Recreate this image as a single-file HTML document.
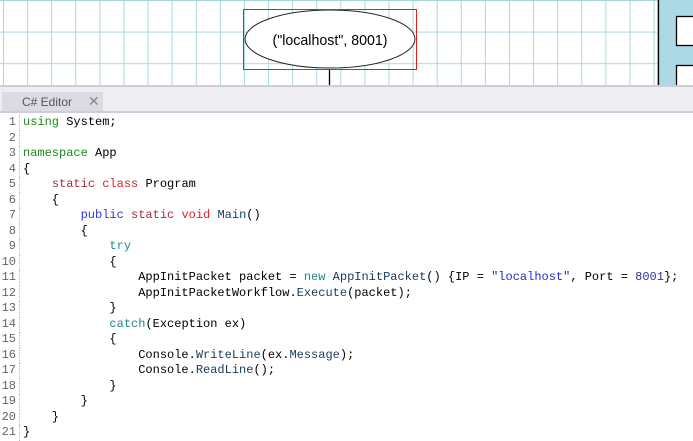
<!DOCTYPE html>
<html><head><style>
body{margin:0;width:693px;height:441px;overflow:hidden;background:#fff;position:relative;font-family:"Liberation Sans",sans-serif}
#canvas{position:absolute;left:0;top:0;width:693px;height:85px;background-color:#fff;
background-image:linear-gradient(to right,#a8d8e0 1px,transparent 1px),linear-gradient(to bottom,#a8d8e0 1px,transparent 1px);
background-size:24.1px 31.6px;background-position:3px 0px;}
#sep{position:absolute;left:0;top:85px;width:693px;height:2px;background:#d0ccd8}
#bar{position:absolute;left:0;top:87px;width:693px;height:24px;background:#eeedf2;border-bottom:2px solid #cfcadc}
#tab{position:absolute;left:2px;top:92px;width:101px;height:19px;background:#dcdbe3;font-size:12px;color:#555;}
#code{position:absolute;left:0;top:115px;font-family:"Liberation Mono",monospace;font-size:12px;line-height:15.5px;white-space:pre;color:#000}
.n{display:inline-block;width:16px;text-align:right;color:#666;padding-right:3px;border-right:1px dotted #bbb;margin-right:3px}
.g{color:#1a8a1a}.r{color:#a03040}.rd{color:#e02030}.b{color:#3333dd}.t{color:#1a8a8a}.f{color:#1a3a5a}.s{color:#2a2acc}.nm{color:#333399}
</style></head><body>
<div id="canvas"></div>
<svg style="position:absolute;left:0;top:0" width="693" height="86">
<line x1="329.5" y1="69" x2="329.5" y2="86" stroke="#000" stroke-width="1.3"/>
<ellipse cx="330" cy="39" rx="85" ry="29" fill="#fff" stroke="#222" stroke-width="1"/>
<rect x="243.5" y="9.5" width="173" height="60" fill="none" stroke="#e02020" stroke-width="1"/>
<text x="330" y="45" text-anchor="middle" font-family="Liberation Sans Narrow, Liberation Sans, sans-serif" font-size="15" textLength="115" lengthAdjust="spacingAndGlyphs" fill="#000">("localhost", 8001)</text>
<rect x="657" y="0" width="40" height="86" fill="#add8e6"/>
<line x1="658.5" y1="0" x2="658.5" y2="86" stroke="#000" stroke-width="1.3"/>
<rect x="676.5" y="16.5" width="20" height="29" fill="#fff" stroke="#000" stroke-width="1.3"/>
<rect x="676.5" y="65.5" width="20" height="25" fill="#fff" stroke="#000" stroke-width="1.3"/>
</svg>
<div id="sep"></div>
<div id="bar"></div>
<div id="tab"><span style="position:absolute;left:20px;top:3px">C# Editor</span><span style="position:absolute;left:86px;top:1px;font-size:14px;color:#888">✕</span></div>
<div id="code"><span class="n">1</span><span class="g">using</span> System;
<span class="n">2</span>
<span class="n">3</span><span class="g">namespace</span> App
<span class="n">4</span>{
<span class="n">5</span>    <span class="r">static</span> <span class="rd">class</span> Program
<span class="n">6</span>    {
<span class="n">7</span>        <span class="b">public</span> <span class="r">static</span> <span class="rd">void</span> <span class="f">Main</span>()
<span class="n">8</span>        {
<span class="n">9</span>            <span class="t">try</span>
<span class="n">10</span>            {
<span class="n">11</span>                AppInitPacket packet = <span class="t">new</span> <span class="f">AppInitPacket</span>() {IP = <span class="s">"localhost"</span>, Port = <span class="nm">8001</span>};
<span class="n">12</span>                AppInitPacketWorkflow.<span class="f">Execute</span>(packet);
<span class="n">13</span>            }
<span class="n">14</span>            <span class="t">catch</span>(Exception ex)
<span class="n">15</span>            {
<span class="n">16</span>                Console.<span class="f">WriteLine</span>(ex.<span class="f">Message</span>);
<span class="n">17</span>                Console.<span class="f">ReadLine</span>();
<span class="n">18</span>            }
<span class="n">19</span>        }
<span class="n">20</span>    }
<span class="n">21</span>}</div>
</body></html>
